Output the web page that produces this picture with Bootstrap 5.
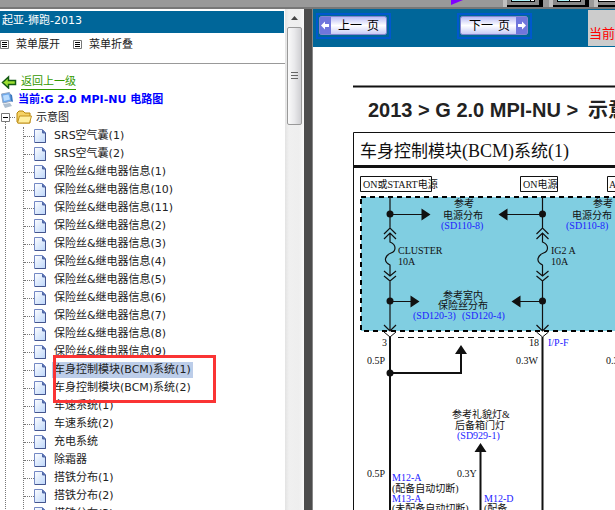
<!DOCTYPE html>
<html lang="zh-CN">
<head>
<meta charset="utf-8">
<meta name="viewport" content="width=device-width, initial-scale=1">
<title>起亚-狮跑-2013</title>
<link href="https://cdn.jsdelivr.net/npm/bootstrap@5.3.0/dist/css/bootstrap.min.css" rel="stylesheet">
<style>
body{font-family:"DejaVu Sans","Noto Sans CJK SC",sans-serif;font-size:11px;line-height:18px;color:#222;background:#fff}
.toolstrip{height:9px;background:#999;border-bottom:2px solid #777}
.toolstrip svg,.sheet{display:block}
.sidebar{width:304px}
.bar{background:#069}
.side-title{height:22px;margin:2px 1px 0 0;padding-left:2px;color:#fff;line-height:20px}
.menu-row{height:31px;padding:0 0 7px;border-bottom:1px solid #999;gap:13px}
.plain{color:inherit;text-decoration:none}
.menu-row button{border:0;background:none;padding:0;color:inherit;gap:7px}
.tree{padding-top:9px}
.back{color:#390;text-decoration:none;border-bottom:1px solid #390;line-height:15px;margin-left:2px}
.current{color:#00f;font-weight:bold}
.tree-line{height:18px;white-space:nowrap}
.dots-v{border-left:1px dotted #777}
.docs{margin-left:5px;padding-left:17px}
.docs ul{margin:0;padding:0;list-style:none}
.docs li{height:18px;display:flex;align-items:center;white-space:nowrap}
.docs li::before{content:"";width:10px;border-top:1px dotted #777}
.docs li a{margin-left:6px;padding:0 2px;line-height:16px}
.docs .chosen{background:#bccde9}
.marker{left:53px;top:291px;width:163px;height:48px;border:3px solid #fa3434;pointer-events:none}
.scroller{width:19px;background:linear-gradient(90deg,#e3e3e3,#f0f0f0 4px,#eee 14px,#fafafa)}
.thumb{height:98px;margin:1px 2px 0;width:15px;border:1px solid #999;border-radius:2px;background:linear-gradient(90deg,#fafafa,#e9e9eb 50%,#cfcfd2)}
.splitter{width:9px;background:#4d4d4d;border-right:1px solid #888}
.main-bar{height:38px}
.page-btn{height:26px;width:75px;padding:1px;border:2px solid #0058ce;background:#069}
.page-btn svg{display:block}
.prev-btn{margin-left:3px}
.next-btn{margin-left:66px}
.status{background:#ccc;color:#f00;font-size:13px;margin:1px 0 1px 56px;padding:15px 1px 0;white-space:nowrap;line-height:18px}
.sheet{font-family:"Liberation Serif","Noto Sans CJK SC",serif;font-size:10px;fill:#111}
.sheet .hd{font:bold 20px "Liberation Sans","Noto Sans CJK SC",sans-serif;fill:#222}
.sheet .ttl{font-size:17px}
.sheet .latin{font-size:18px}
.sheet .ref{fill:#1c1cff}
.sheet .wire{fill:none;stroke:#111}
</style>
<script src="https://cdn.jsdelivr.net/npm/bootstrap@5.3.0/dist/js/bootstrap.bundle.min.js"></script>
</head>
<body class="vh-100 overflow-hidden d-flex flex-column">
<svg width="0" height="0" class="position-absolute" aria-hidden="true">
<defs>
<linearGradient id="paper" x1="0" y1="0" x2="1" y2="1"><stop offset="0" stop-color="#fff"/><stop offset="1" stop-color="#bcd6fa"/></linearGradient>
<linearGradient id="gloss" x1="0" y1="0" x2="0" y2="1"><stop offset="0" stop-color="#b5b8f4"/><stop offset=".5" stop-color="#fff"/><stop offset="1" stop-color="#c5c7f6"/></linearGradient>
<symbol id="doc" viewBox="0 0 12 14"><path d="M.5.5h8l3 3v10H.5z" fill="url(#paper)" stroke="#7388c4"/><path d="M8.500 1v3h3" fill="#5068a8" stroke="#5068a8"/><path d="M11.500 4v9.500H1" fill="none" stroke="#44558e"/></symbol>
<symbol id="lines" viewBox="0 0 9 9"><path d="M.5.5h8v8h-8z" fill="#fff" stroke="#777"/><path d="M2 2.500h5M2 4.500h5M2 6.500h5" stroke="#000"/></symbol>
</defs>
</svg>
<header class="toolstrip flex-shrink-0 overflow-hidden">
<svg width="615" height="7" aria-hidden="true"><path d="M451 0h12l-12 5z" fill="#8000ff"/><path d="M503 0h4v7h-4zM549 0h4v7h-4zM594 0h4v7h-4z" fill="#c0c0c0"/><path d="M507 5h36v2h-36zM553 5h36v2h-36zM598 5h17v2h-17zM539 0h4v7h-4zM585 0h4v7h-4z"/><path d="M507 0h32v5h-32zM553 0h32v5h-32zM598 0h17v5h-17z" fill="#888"/><path d="M511 0h24v2h-24zM557 0h24v2h-24zM598 0h17v2h-17z"/><path d="M512 0h18v1h-18zM558 0h11v1h-11z" fill="#aef5fa"/><path d="M531 0h3v1h-3zM570 0h10v1h-10zM599 0h16v1h-16z" fill="#fff"/></svg>
</header>
<div class="d-flex flex-grow-1 overflow-hidden">
<aside class="sidebar d-flex flex-shrink-0">
<div class="flex-grow-1 overflow-hidden">
<div class="bar side-title">起亚-狮跑-2013</div>
<div class="menu-row d-flex"><button type="button" class="d-flex align-items-center"><svg width="9" height="9"><use href="#lines"/></svg>菜单展开</button><button type="button" class="d-flex align-items-center"><svg width="9" height="9"><use href="#lines"/></svg>菜单折叠</button></div>
<nav class="tree position-relative" aria-label="目录">
<div class="tree-line d-flex align-items-center"><svg width="19" height="14" class="flex-shrink-0" aria-hidden="true"><path d="M2.500 7.500l6-5.500v3.500h7v4h-7V13z" fill="#9de031" stroke="#145a14" stroke-width="1.500"/></svg><a href="#" class="back">返回上一级</a></div>
<div class="tree-line d-flex align-items-center current"><svg width="14" height="17" class="flex-shrink-0 me-1" aria-hidden="true"><path d="M1.500 2l8-1.500L12 9l-9 2z" fill="#6ca9ed" stroke="#94a8c4"/><path d="M3 3.500l5.500-1 1.500 5-6 1.500z" fill="#b9dcff"/><path d="M3 12l7-1 2 3-7 2z" fill="#aebfd0"/><path d="M10 2l2 1 1 7-2-1z" fill="#3978c2"/></svg><span>当前:G 2.0 MPI-NU 电路图</span></div>
<div class="tree-line d-flex align-items-center"><svg width="32" height="18" class="flex-shrink-0" aria-hidden="true"><path d="M1.500 4.500h8v8h-8z" fill="#fff" stroke="#777"/><path d="M3 8.500h5" stroke="#000"/><path d="M10 8.500h6M5.500 13v5" stroke="#777" stroke-dasharray="1 1"/><path d="M17 13V4l2-2h4l2 2h5v10H18z" fill="#f5d265" stroke="#b8860b"/><path d="M17.500 14l2-7h12l-2 7z" fill="#ffef9f" stroke="#c39320"/></svg><span class="ps-1">示意图</span></div>
<div class="docs dots-v"><ul class="dots-v">
<li><svg width="12" height="14"><use href="#doc"/></svg><a class="plain" href="#">SRS空气囊(1)</a></li>
<li><svg width="12" height="14"><use href="#doc"/></svg><a class="plain" href="#">SRS空气囊(2)</a></li>
<li><svg width="12" height="14"><use href="#doc"/></svg><a class="plain" href="#">保险丝&amp;继电器信息(1)</a></li>
<li><svg width="12" height="14"><use href="#doc"/></svg><a class="plain" href="#">保险丝&amp;继电器信息(10)</a></li>
<li><svg width="12" height="14"><use href="#doc"/></svg><a class="plain" href="#">保险丝&amp;继电器信息(11)</a></li>
<li><svg width="12" height="14"><use href="#doc"/></svg><a class="plain" href="#">保险丝&amp;继电器信息(2)</a></li>
<li><svg width="12" height="14"><use href="#doc"/></svg><a class="plain" href="#">保险丝&amp;继电器信息(3)</a></li>
<li><svg width="12" height="14"><use href="#doc"/></svg><a class="plain" href="#">保险丝&amp;继电器信息(4)</a></li>
<li><svg width="12" height="14"><use href="#doc"/></svg><a class="plain" href="#">保险丝&amp;继电器信息(5)</a></li>
<li><svg width="12" height="14"><use href="#doc"/></svg><a class="plain" href="#">保险丝&amp;继电器信息(6)</a></li>
<li><svg width="12" height="14"><use href="#doc"/></svg><a class="plain" href="#">保险丝&amp;继电器信息(7)</a></li>
<li><svg width="12" height="14"><use href="#doc"/></svg><a class="plain" href="#">保险丝&amp;继电器信息(8)</a></li>
<li><svg width="12" height="14"><use href="#doc"/></svg><a class="plain" href="#">保险丝&amp;继电器信息(9)</a></li>
<li><svg width="12" height="14"><use href="#doc"/></svg><a class="plain chosen" href="#">车身控制模块(BCM)系统(1)</a></li>
<li><svg width="12" height="14"><use href="#doc"/></svg><a class="plain" href="#">车身控制模块(BCM)系统(2)</a></li>
<li><svg width="12" height="14"><use href="#doc"/></svg><a class="plain" href="#">车速系统(1)</a></li>
<li><svg width="12" height="14"><use href="#doc"/></svg><a class="plain" href="#">车速系统(2)</a></li>
<li><svg width="12" height="14"><use href="#doc"/></svg><a class="plain" href="#">充电系统</a></li>
<li><svg width="12" height="14"><use href="#doc"/></svg><a class="plain" href="#">除霜器</a></li>
<li><svg width="12" height="14"><use href="#doc"/></svg><a class="plain" href="#">搭铁分布(1)</a></li>
<li><svg width="12" height="14"><use href="#doc"/></svg><a class="plain" href="#">搭铁分布(2)</a></li>
<li><svg width="12" height="14"><use href="#doc"/></svg><a class="plain" href="#">搭铁分布(3)</a></li>
</ul></div>
<div class="marker position-absolute"></div>
</nav>
</div>
<div class="scroller flex-shrink-0"><svg width="19" height="17" class="d-block" aria-hidden="true"><path d="M6 11l3.500-4 3.500 4z" fill="#444"/></svg><div class="thumb d-flex align-items-center justify-content-center"><svg width="7" height="8" aria-hidden="true"><path d="M0 .5h7M0 3.500h7M0 6.500h7" stroke="#666"/></svg></div></div>
</aside>
<div class="splitter flex-shrink-0"></div>
<main class="flex-grow-1 overflow-hidden">
<div class="bar main-bar d-flex">
<button type="button" class="page-btn prev-btn flex-shrink-0 mt-1" aria-label="上一页"><svg width="69" height="20" font-family="Noto Sans CJK SC,sans-serif" font-size="12"><rect x=".5" y=".5" width="67" height="18" rx="2" fill="url(#gloss)" stroke="#8585cf"/><path d="M1 1h11v17H1z" fill="#7076dc"/><path d="M2 9.500l4-4V8h4v3H6v2.500z" fill="#fff"/><text x="19" y="14">上一</text><text x="48" y="14">页</text></svg></button>
<button type="button" class="page-btn next-btn flex-shrink-0 mt-1" aria-label="下一页"><svg width="69" height="20" font-family="Noto Sans CJK SC,sans-serif" font-size="12"><rect x=".5" y=".5" width="67" height="18" rx="2" fill="url(#gloss)" stroke="#8585cf"/><path d="M56 1h11v17H56z" fill="#7076dc"/><path d="M66 9.500l-4-4V8h-4v3h4v2.500z" fill="#fff"/><text x="9" y="14">下一</text><text x="38" y="14">页</text></svg></button>
<div class="status flex-grow-1">当前</div>
</div>
<svg class="sheet" width="302" height="463" viewBox="313 47 302 463" role="img" aria-label="车身控制模块电路图">
<path class="wire" d="M353 86.500h262" stroke-width="2"/>
<text class="hd" x="368" y="117">2013 &gt; G 2.0 MPI-NU &gt; <tspan x="588">示意图</tspan></text>
<path class="wire" d="M615 132.500H353.500V510"/><path class="wire" d="M353 166.500h262" stroke-width="3"/>
<text class="ttl" x="360" y="157">车身控制模块<tspan class="latin">(BCM)</tspan>系统<tspan class="latin">(1)</tspan></text>
<rect x="361" y="197" width="270" height="134" fill="#80cee1" stroke="#000" stroke-width="2" stroke-dasharray="5 4"/>
<path class="wire" d="M360.500 176.500h71v15h-71zM520.500 176.500h37v15h-37zM607.500 176.500h20v15h-20z"/>
<text x="363" y="188">ON或START电源</text><text x="523" y="188">ON电源</text><text x="609" y="188">A</text>
<g id="feed"><path class="wire" d="M390 197v31M384 234l6-6 6 6M384 239l6-6 6 6M390 233v9c7 3 6 9 1 11s-9 8-1 12v11M384 271l6 5 6-5M384 276l6 5 6-5M390 281v50M384 325l6 6 6-6" stroke-width="1.200"/><path d="M384 332l6 5 6-5" fill="#fff" stroke="#111"/><circle cx="390" cy="214" r="3.500"/><circle cx="390" cy="301" r="3.500"/></g>
<use href="#feed" x="152.500"/>
<path class="wire" d="M390 337v173M542.500 337v173M390 373h71v-22M480.500 450v60" stroke-width="2"/>
<path class="wire" d="M390 214.500h33M506 214.500h36M390 301.500h22M519 301.500h23"/><path class="wire" d="M398 337.500h140" stroke-dasharray="6 4"/>
<circle cx="390" cy="373" r="3.500"/>
<path d="M430.500 214.500l-9-6v12zM498.500 214.500l9-6v12zM419.500 301.500l-9-6v12zM511.500 301.500l9-6v12zM461 345l-6 9h12zM480.500 443l-6 9h12z"/>
<g><text x="454" y="207">参考</text><text x="443" y="219">电源分布</text><text class="ref" x="441" y="229">(SD110-8)</text>
<text x="593" y="207">参考</text><text x="572" y="219">电源分布</text><text class="ref" x="566" y="229">(SD110-8)</text>
<text x="398" y="254">CLUSTER</text><text x="398" y="265">10A</text><text x="551" y="254">IG2 A</text><text x="551" y="265">10A</text>
<text x="443" y="299">参考室内</text><text x="438" y="309">保险丝分布</text><text class="ref" x="413" y="319">(SD120-3)</text><text class="ref" x="462" y="319">(SD120-4)</text>
<text x="382" y="346">3</text><text x="529" y="346">18</text><text class="ref" x="548" y="346">I/P-F</text>
<text x="367" y="364">0.5P</text><text x="516" y="364">0.3W</text><text x="606" y="364">0.3</text>
<text x="452" y="418">参考礼貌灯&amp;</text><text x="455" y="429">后备箱门灯</text><text class="ref" x="457" y="439">(SD929-1)</text>
<text x="367" y="477">0.5P</text><text x="457" y="477">0.3Y</text>
<text class="ref" x="392" y="481">M12-A</text><text x="392" y="492">(配备自动切断)</text><text class="ref" x="392" y="502">M13-A</text><text x="392" y="512">(未配备自动切断)</text>
<text class="ref" x="484" y="502">M12-D</text><text x="484" y="512">(配备</text></g>
</svg>
</main>
</div>
</body>
</html>
